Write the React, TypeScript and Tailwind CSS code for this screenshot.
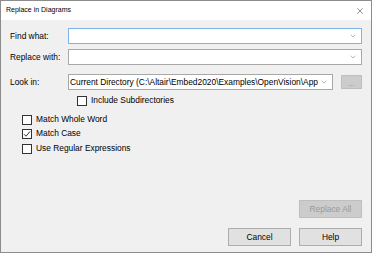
import { ChevronDown, X } from "lucide-react";

const font = { fontFamily: '"Liberation Sans", Arial, sans-serif' };

const Combo = ({ value, focused, width }: { value?: string; focused?: boolean; width: string }) => (
  <div
    className={`${width} h-[16px] flex items-center bg-white border ${
      focused ? "border-[#7eb4ea]" : "border-[#a8a8a8]"
    }`}
  >
    <div className="flex-1 pl-[1px] text-[8.4px] text-black whitespace-nowrap overflow-hidden">{value}</div>
    <ChevronDown size={8} strokeWidth={1.5} className="text-[#707070] mr-[4px] shrink-0" />
  </div>
);

const Check = ({ label, checked, className }: { label: string; checked?: boolean; className?: string }) => (
  <div className={`flex items-center gap-[4px] h-[11px] ${className ?? ""}`}>
    <div className="w-[10px] h-[10px] border border-[#333] bg-white flex items-center justify-center">
      {checked && (
        <svg width="8" height="8" viewBox="0 0 8 8">
          <path d="M1 4.2 L3 6.2 L7 1.5" fill="none" stroke="#333" strokeWidth="1" />
        </svg>
      )}
    </div>
    <span className="text-[8.4px] text-black">{label}</span>
  </div>
);

const Btn = ({ label, disabled }: { label: string; disabled?: boolean }) => (
  <div
    className={`w-[63px] h-[18px] flex items-center justify-center text-[8.4px] border ${
      disabled ? "bg-[#cccccc] border-[#bfbfbf] text-[#9a9a9a]" : "bg-[#e1e1e1] border-[#adadad] text-black"
    }`}
  >
    {label}
  </div>
);

export default function App() {
  return (
    <div className="w-[372px] h-[254px] bg-white" style={font}>
      <div className="w-[372px] h-[253px] border border-[#8c8c8c] bg-[#f0f0f0] flex flex-col">
        <div className="h-[19px] bg-white flex items-center justify-between pl-[5px] pr-[6px] shrink-0">
          <span className="text-[7px] text-black">Replace in Diagrams</span>
          <X size={10} strokeWidth={1.2} className="text-[#222]" />
        </div>
        <div className="flex-1 flex flex-col pl-[9px] pr-[9px] pt-[8px] pb-[6px]">
          <div className="flex items-center">
            <span className="w-[58px] text-[8.4px] text-black">Find what:</span>
            <Combo focused width="w-[294px]" />
          </div>
          <div className="flex items-center mt-[5px]">
            <span className="w-[58px] text-[8.4px] text-black">Replace with:</span>
            <Combo width="w-[294px]" />
          </div>
          <div className="flex items-center mt-[9px]">
            <span className="w-[58px] text-[8.4px] text-black">Look in:</span>
            <Combo width="w-[265px]" value="Current Directory (C:\Altair\Embed2020\Examples\OpenVision\App" />
            <div className="ml-[8px] w-[21px] h-[14px] bg-[#cccccc] border border-[#bfbfbf] flex items-center justify-center">
              <span className="text-[8px] text-[#8f8f8f] leading-none pt-[3px]">...</span>
            </div>
          </div>
          <Check className="ml-[67px] mt-[5px]" label="Include Subdirectories" />
          <Check className="ml-[12px] mt-[8px]" label="Match Whole Word" />
          <Check className="ml-[12px] mt-[3px]" label="Match Case" checked />
          <Check className="ml-[12px] mt-[4px]" label="Use Regular Expressions" />
          <div className="flex-1" />
          <div className="flex justify-end">
            <Btn label="Replace All" disabled />
          </div>
          <div className="flex justify-end gap-[8px] mt-[10px]">
            <Btn label="Cancel" />
            <Btn label="Help" />
          </div>
        </div>
      </div>
    </div>
  );
}
